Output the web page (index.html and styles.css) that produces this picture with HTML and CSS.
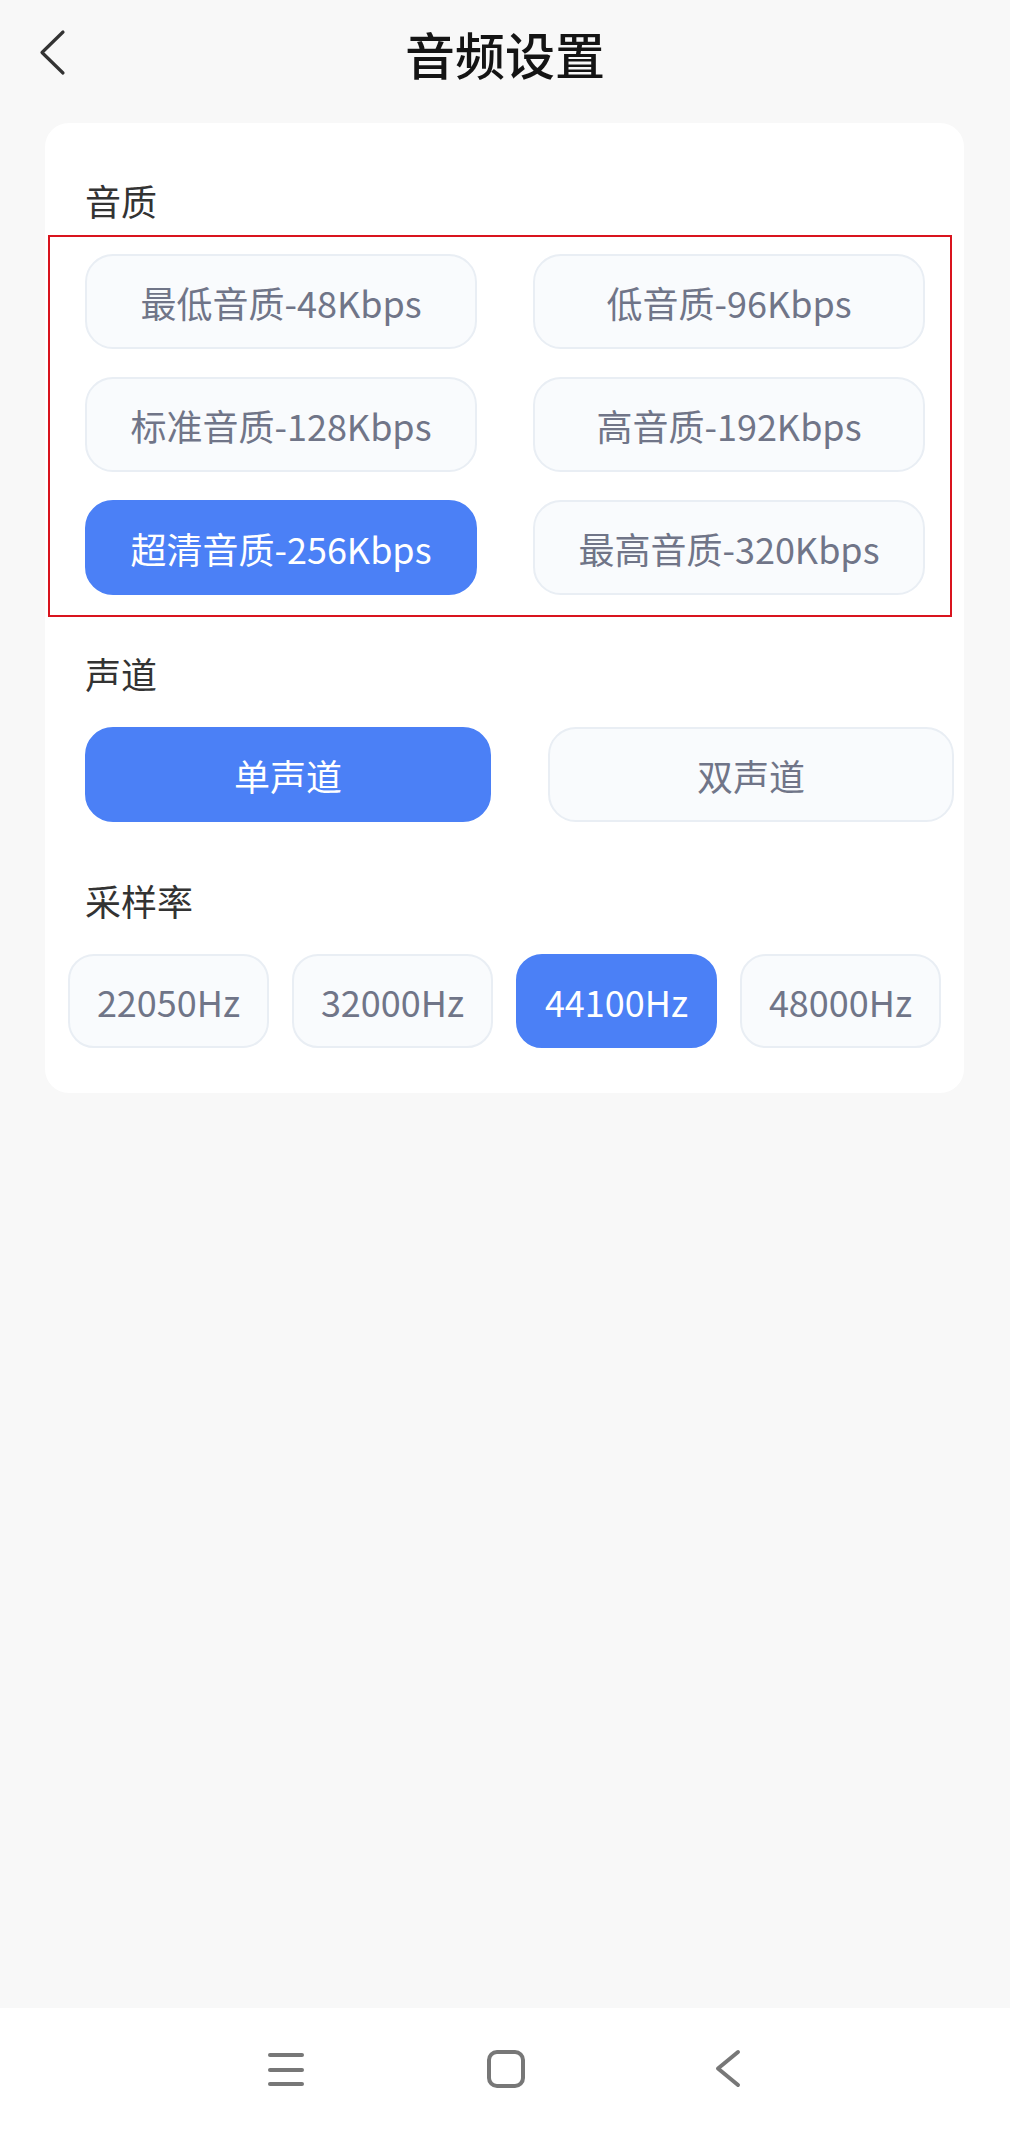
FILE: index.html
```html
<!DOCTYPE html>
<html lang="zh-CN">
<head>
    <meta charset="UTF-8">
    <meta name="viewport" content="width=device-width, initial-scale=1.0">
    <title>音频设置</title>
    <link rel="stylesheet" href="styles.css">
</head>
<body>
    <div class="page">
        <header class="top-bar">
            <svg class="back" width="30" height="50" viewBox="0 0 30 50">
                <polyline points="24,4 3,24.5 24,45" fill="none" stroke="#333" stroke-width="3.2" stroke-linecap="round" stroke-linejoin="round"/>
            </svg>
            <h1>音频设置</h1>
        </header>

        <div class="card">
            <div class="section">
                <div class="label">音质</div>
                <div class="quality-grid">
                    <button class="opt">最低音质-48Kbps</button>
                    <button class="opt">低音质-96Kbps</button>
                    <button class="opt">标准音质-128Kbps</button>
                    <button class="opt">高音质-192Kbps</button>
                    <button class="opt active">超清音质-256Kbps</button>
                    <button class="opt">最高音质-320Kbps</button>
                </div>
            </div>

            <div class="section">
                <div class="label">声道</div>
                <div class="channel-row">
                    <button class="opt active">单声道</button>
                    <button class="opt">双声道</button>
                </div>
            </div>

            <div class="section">
                <div class="label">采样率</div>
                <div class="rate-row">
                    <button class="opt">22050Hz</button>
                    <button class="opt">32000Hz</button>
                    <button class="opt active">44100Hz</button>
                    <button class="opt">48000Hz</button>
                </div>
            </div>

            <div class="mark"></div>
        </div>
    </div>

    <nav class="sys-nav">
        <svg width="36" height="36" viewBox="0 0 36 36">
            <g stroke="#777" stroke-width="4" stroke-linecap="round">
                <line x1="2" y1="4" x2="34" y2="4"/>
                <line x1="2" y1="19" x2="34" y2="19"/>
                <line x1="2" y1="33" x2="34" y2="33"/>
            </g>
        </svg>
        <svg width="40" height="40" viewBox="0 0 40 40">
            <rect x="3" y="3" width="34" height="34" rx="8" fill="none" stroke="#777" stroke-width="4"/>
        </svg>
        <svg width="28" height="40" viewBox="0 0 28 40">
            <polyline points="24,3 4,19.5 24,36" fill="none" stroke="#777" stroke-width="4" stroke-linecap="round" stroke-linejoin="round"/>
        </svg>
    </nav>
</body>
</html>
```

FILE: styles.css
```css
body {
    margin: 0;
    background-color: #f8f8f8;
    font-family: "Noto Sans CJK SC", "Noto Sans", sans-serif;
    height: 2130px;
    display: flex;
    flex-direction: column;
}

.page {
    flex: 1;
}

.top-bar {
    height: 106px;
    display: flex;
    align-items: center;
    justify-content: center;
    position: relative;
}

.top-bar .back {
    position: absolute;
    left: 39px;
    top: 28px;
}

.top-bar h1 {
    margin: 0;
    font-size: 50px;
    font-weight: 500;
    color: #141414;
    line-height: 60px;
}

.card {
    position: relative;
    margin: 17px 46px 0 45px;
    background-color: #fff;
    border-radius: 24px;
    padding: 53px 40px 45px 40px;
}

.section + .section {
    margin-top: 54px;
}

.label {
    font-size: 36px;
    line-height: 48px;
    color: #333;
    margin-bottom: 30px;
}

.opt {
    height: 95px;
    border: 2px solid #e9eef4;
    background-color: #f9fbfd;
    border-radius: 28px;
    color: #707588;
    font-family: inherit;
    font-size: 36px;
    padding: 0;
    cursor: pointer;
}

.opt.active {
    background-color: #4b80f6;
    border-color: #4b80f6;
    color: #fff;
}

.quality-grid {
    display: grid;
    grid-template-columns: 392px 392px;
    column-gap: 56px;
    row-gap: 28px;
}

.channel-row {
    display: flex;
    gap: 57px;
}

.channel-row .opt {
    width: 406px;
    flex-shrink: 0;
}

.rate-row {
    display: flex;
    gap: 23px;
    margin-left: -17px;
}

.rate-row .opt {
    width: 201px;
    height: 94px;
    flex-shrink: 0;
    border-radius: 26px;
}

/* red annotation box over the quality options */
.mark {
    position: absolute;
    left: 3px;
    top: 112px;
    width: 900px;
    height: 378px;
    border: 2px solid #d9141e;
    pointer-events: none;
}

.sys-nav {
    height: 122px;
    background-color: #fff;
    display: flex;
    align-items: center;
    justify-content: center;
}

.sys-nav svg:nth-child(1) {
    margin-right: 182px;
}

.sys-nav svg:nth-child(2) {
    margin-right: 188px;
}
```
